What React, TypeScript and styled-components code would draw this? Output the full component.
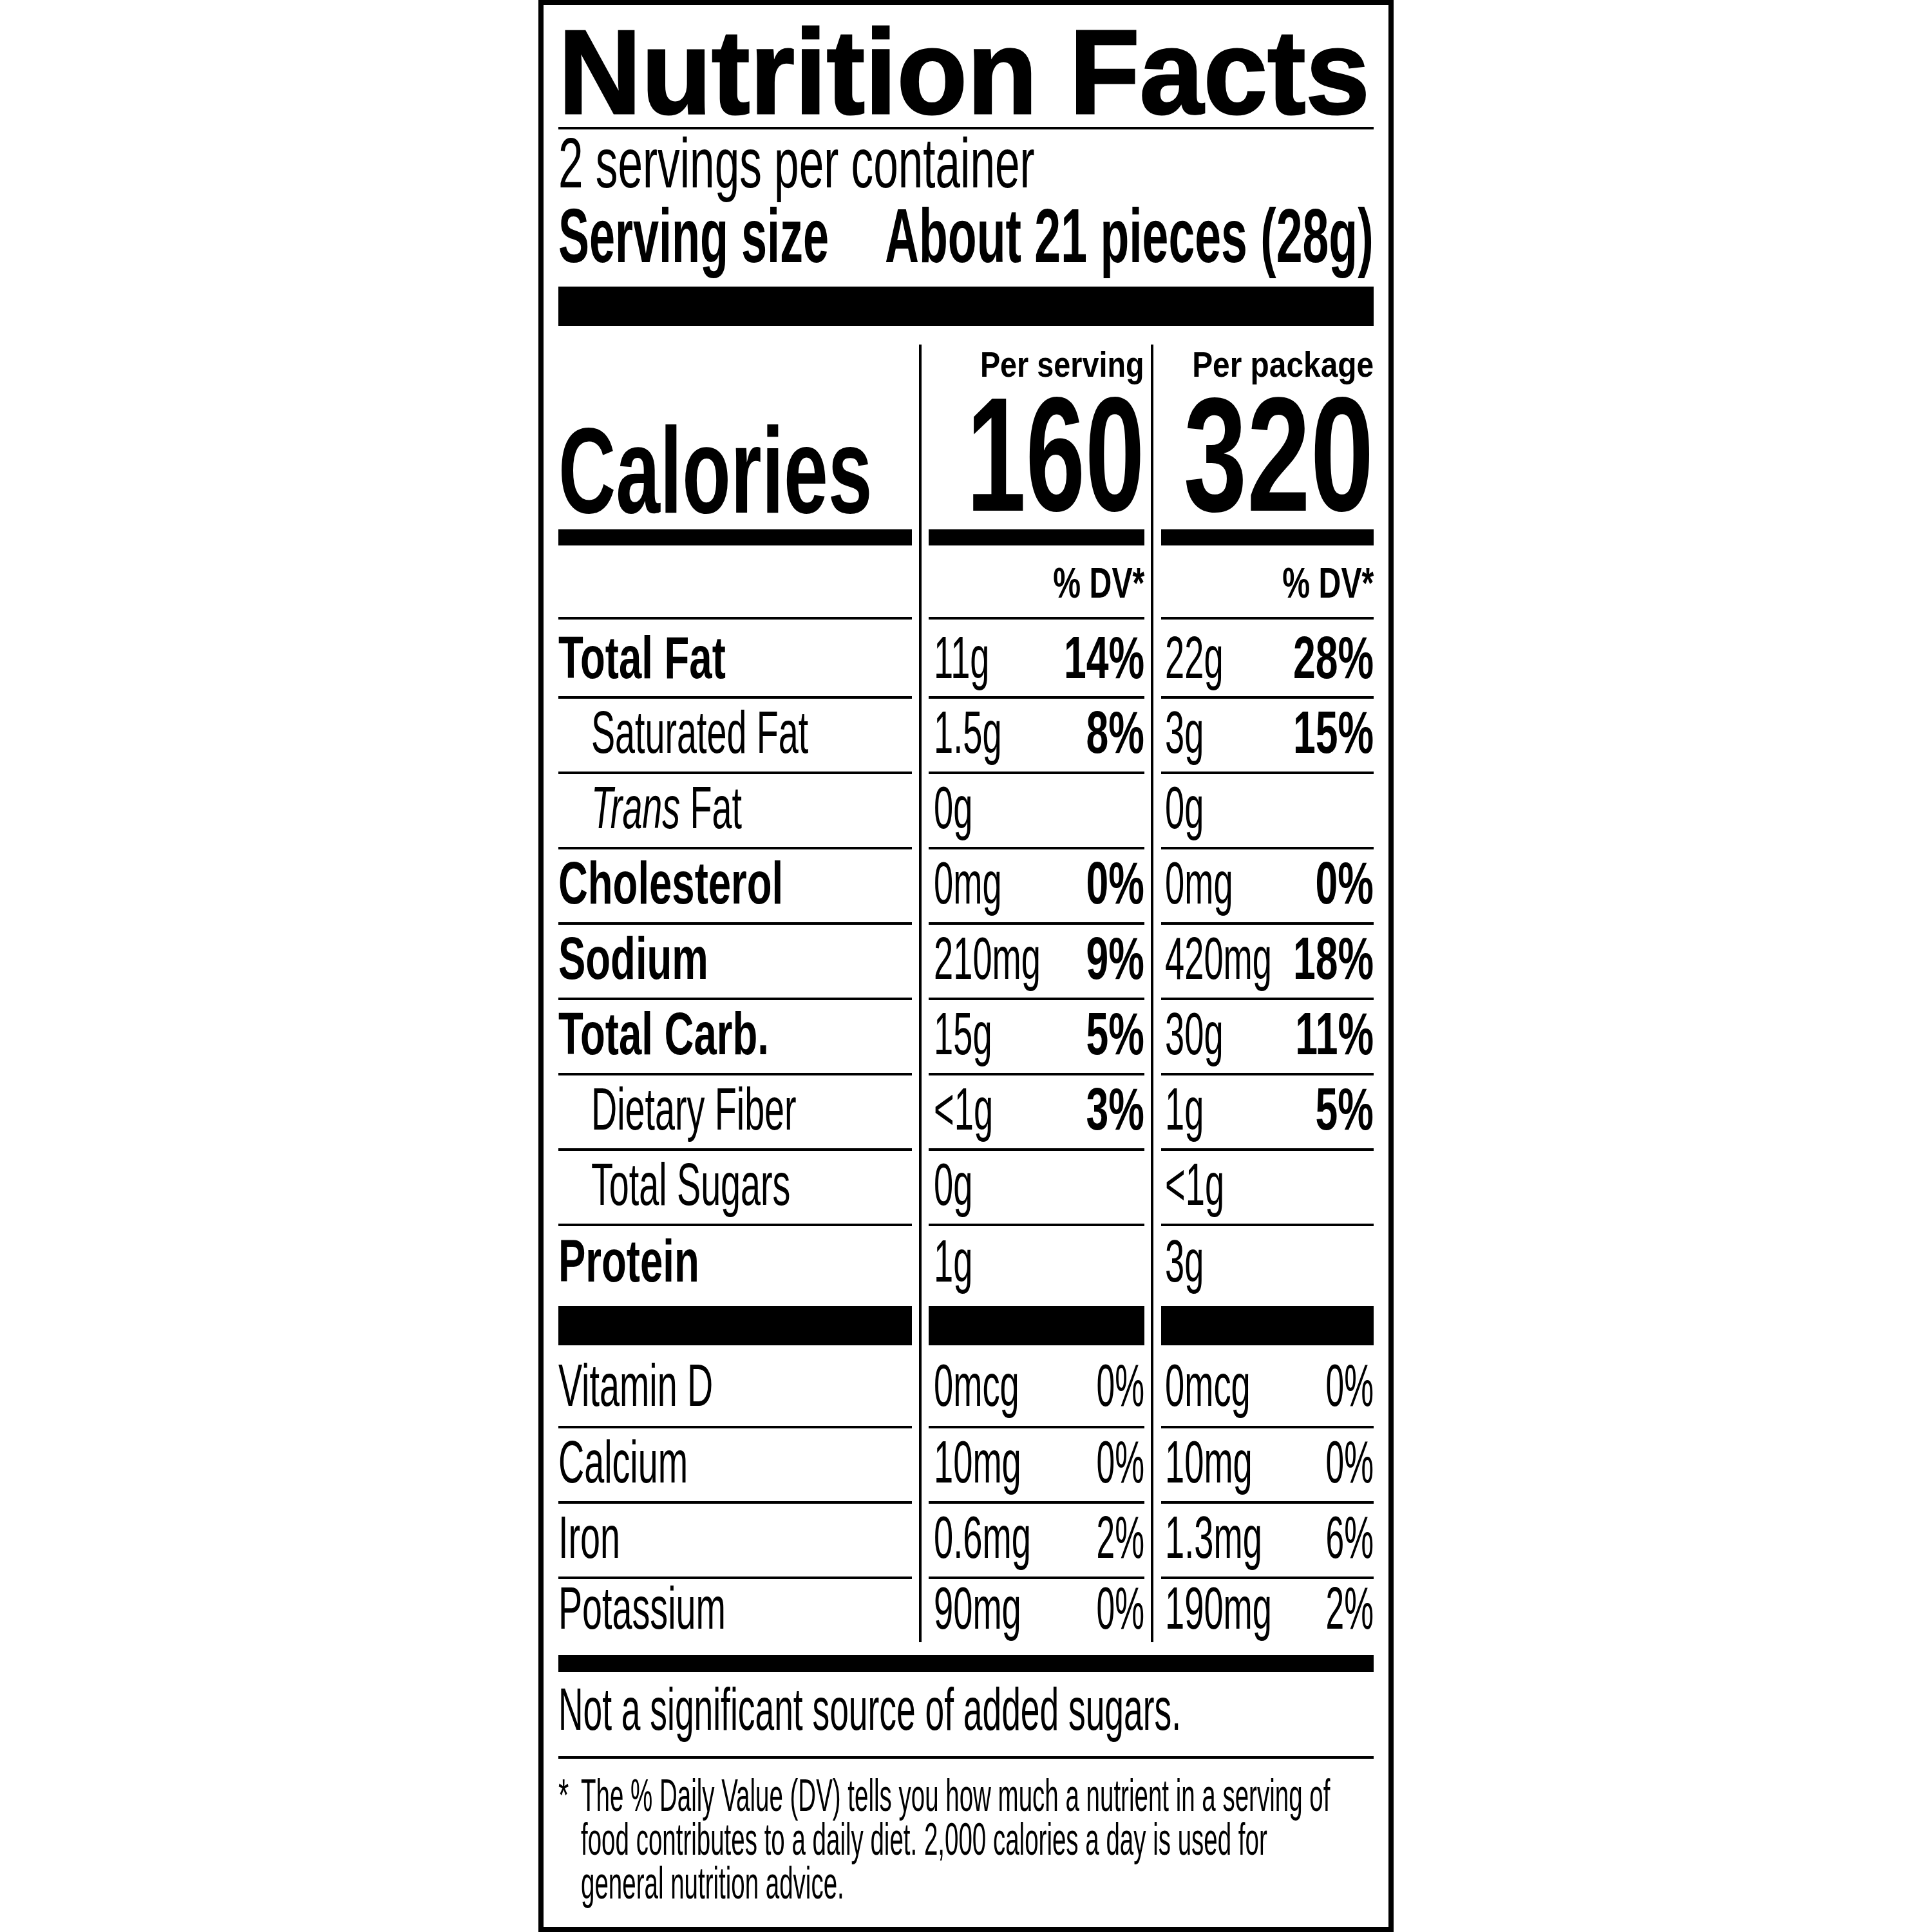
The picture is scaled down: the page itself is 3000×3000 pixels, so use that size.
import React from 'react';
import styled, { createGlobalStyle, css } from 'styled-components';

const GlobalStyle = createGlobalStyle`
  html,
  body {
    margin: 0;
    padding: 0;
    background: #fff;
    overflow: hidden;
  }
  body {
    font-family: 'Liberation Sans', Arial, sans-serif;
    color: #000;
  }
`;

// the label face is a condensed grotesque; we only have Arial widths, so squeeze horizontally
const squeeze = (k: number, from: 'left' | 'right' = 'left') => css`
  display: inline-block;
  flex-shrink: 0;
  white-space: nowrap;
  transform: scaleX(${k});
  transform-origin: ${from} center;
`;

const Page = styled.div`
  width: 3000px;
  height: 3000px;
  display: flex;
  justify-content: center;
`;

const Panel = styled.main`
  box-sizing: border-box;
  width: 1328px;
  height: 3000px;
  border: 8px solid #000;
  padding: 29px 23px 0;
  display: flex;
  flex-direction: column;
  overflow: hidden;
  background: #fff;
  & > * {
    flex-shrink: 0;
  }
`;

const Rule = styled.div<{ $h: number; $mt: number }>`
  height: ${(p) => p.$h}px;
  margin-top: ${(p) => p.$mt}px;
  background: #000;
`;

const Title = styled.h1`
  margin: 0;
  font-size: 186px;
  line-height: 150px;
  font-weight: 700;
  -webkit-text-stroke: 3px #000;
  ${squeeze(0.96)}
`;

const Servings = styled.p`
  margin: 2px 0 0;
  font-size: 110px;
  line-height: 100px;
  font-weight: 400;
  ${squeeze(0.63)}
`;

const ServingSizeRow = styled.div`
  margin-top: 4px;
  display: flex;
  font-size: 118px;
  line-height: 118px;
  font-weight: 700;
`;

const Slot = styled.div<{ $end?: boolean }>`
  flex: 1 1 0;
  min-width: 0;
  display: flex;
  justify-content: ${(p) => (p.$end ? 'flex-end' : 'flex-start')};
  align-items: flex-end;
`;

const ServingSizeText = styled.span<{ $k: number; $from?: 'left' | 'right' }>`
  ${(p) => squeeze(p.$k, p.$from)}
`;

const Table = styled.section`
  margin-top: 29px;
  display: grid;
  grid-template-columns: 549px 26px 335px 26px 330px;
  grid-template-rows: 312px 115px 123px repeat(7, 117px) 185px 129px 117px 117px 98px;
`;

const Divider = styled.div<{ $col: number; $offset: number }>`
  grid-column: ${(p) => p.$col};
  grid-row: 1 / -1;
  display: flex;
  padding-left: ${(p) => p.$offset}px;
  &::before {
    content: '';
    width: 4px;
    background: #000;
  }
`;

const CaloriesCell = styled.div`
  grid-column: 1;
  display: flex;
  align-items: flex-end;
  padding-bottom: 17px;
  border-bottom: 25px solid #000;
`;

const CaloriesText = styled.span`
  font-size: 190px;
  line-height: 150px;
  font-weight: 700;
  ${squeeze(0.65)}
`;

const AmountHead = styled.div<{ $col: number }>`
  grid-column: ${(p) => p.$col};
  display: flex;
  flex-direction: column;
  align-items: flex-end;
  padding-top: 4px;
  border-bottom: 25px solid #000;
`;

const ColumnHead = styled.span<{ $k: number }>`
  font-size: 55px;
  line-height: 55px;
  font-weight: 700;
  ${(p) => squeeze(p.$k, 'right')}
`;

const BigNumber = styled.span<{ $k: number }>`
  margin-top: 17px;
  font-size: 253px;
  line-height: 190px;
  font-weight: 700;
  ${(p) => squeeze(p.$k, 'right')}
`;

const Cell = styled.div<{ $col: number; $rule: number; $pb: number; $pl: number }>`
  grid-column: ${(p) => p.$col};
  display: flex;
  align-items: flex-end;
  padding: 0 0 ${(p) => p.$pb}px ${(p) => p.$pl}px;
  border-bottom: ${(p) => p.$rule}px solid #000;
`;

const DvHead = styled.span`
  font-size: 67px;
  line-height: 67px;
  font-weight: 700;
  ${squeeze(0.72, 'right')}
`;

const NutrientLabel = styled.span<{ $bold: boolean }>`
  font-size: 92px;
  line-height: 92px;
  font-weight: ${(p) => (p.$bold ? 700 : 400)};
  ${(p) => squeeze(p.$bold ? 0.69 : 0.605)}
  em {
    font-style: italic;
  }
`;

const Amount = styled.span`
  font-size: 92px;
  line-height: 92px;
  font-weight: 400;
  ${squeeze(0.59)}
`;

const Percent = styled.span<{ $bold: boolean }>`
  font-size: 92px;
  line-height: 92px;
  font-weight: ${(p) => (p.$bold ? 700 : 400)};
  ${(p) => squeeze(p.$bold ? 0.68 : 0.56, 'right')}
`;

const Note = styled.p`
  margin: 12px 0 0;
  font-size: 92px;
  line-height: 92px;
  font-weight: 400;
  ${squeeze(0.58)}
`;

const Footnote = styled.div`
  margin-top: 23px;
  display: flex;
  font-size: 70px;
  line-height: 68px;
`;

const Star = styled.span`
  width: 35px;
  flex-shrink: 0;
  display: flex;
  & > span {
    ${squeeze(0.6)}
  }
`;

const FootText = styled.span`
  ${squeeze(0.55)}
`;

type Kind = 'main' | 'sub' | 'vitamin';

type NutrientRow = {
  name: string;
  label: React.ReactNode;
  kind: Kind;
  serving: [string, string?];
  pack: [string, string?];
  rule?: number;
  pb?: number;
};

const ROWS: NutrientRow[] = [
  { name: 'fat', label: 'Total Fat', kind: 'main', serving: ['11g', '14%'], pack: ['22g', '28%'], pb: 14 },
  { name: 'sat', label: 'Saturated Fat', kind: 'sub', serving: ['1.5g', '8%'], pack: ['3g', '15%'] },
  {
    name: 'trans',
    label: (
      <>
        <em>Trans</em> Fat
      </>
    ),
    kind: 'sub',
    serving: ['0g'],
    pack: ['0g'],
  },
  { name: 'chol', label: 'Cholesterol', kind: 'main', serving: ['0mg', '0%'], pack: ['0mg', '0%'] },
  { name: 'sodium', label: 'Sodium', kind: 'main', serving: ['210mg', '9%'], pack: ['420mg', '18%'] },
  { name: 'carb', label: 'Total Carb.', kind: 'main', serving: ['15g', '5%'], pack: ['30g', '11%'] },
  { name: 'fiber', label: 'Dietary Fiber', kind: 'sub', serving: ['<1g', '3%'], pack: ['1g', '5%'] },
  { name: 'sugars', label: 'Total Sugars', kind: 'sub', serving: ['0g'], pack: ['<1g'] },
  { name: 'protein', label: 'Protein', kind: 'main', serving: ['1g'], pack: ['3g'], rule: 61, pb: 24 },
  { name: 'vitd', label: 'Vitamin D', kind: 'vitamin', serving: ['0mcg', '0%'], pack: ['0mcg', '0%'], pb: 17 },
  { name: 'calcium', label: 'Calcium', kind: 'vitamin', serving: ['10mg', '0%'], pack: ['10mg', '0%'] },
  { name: 'iron', label: 'Iron', kind: 'vitamin', serving: ['0.6mg', '2%'], pack: ['1.3mg', '6%'] },
  { name: 'potassium', label: 'Potassium', kind: 'vitamin', serving: ['90mg', '0%'], pack: ['190mg', '2%'], rule: 0, pb: 7 },
];

const ValueCell = ({ col, pl, row, values }: { col: number; pl: number; row: NutrientRow; values: [string, string?] }) => (
  <Cell $col={col} $rule={row.rule ?? 4} $pb={row.pb ?? 15} $pl={pl}>
    <Slot>
      <Amount>{values[0]}</Amount>
    </Slot>
    <Slot $end>{values[1] && <Percent $bold={row.kind !== 'vitamin'}>{values[1]}</Percent>}</Slot>
  </Cell>
);

const App = () => {
  return (
    <Page>
      <GlobalStyle />
      <Panel>
        <Title>Nutrition Facts</Title>
        <Rule $h={4} $mt={10} />
        <Servings>2 servings per container</Servings>
        <ServingSizeRow>
          <Slot>
            <ServingSizeText $k={0.61}>Serving size</ServingSizeText>
          </Slot>
          <Slot $end>
            <ServingSizeText $k={0.622} $from="right">
              About 21 pieces (28g)
            </ServingSizeText>
          </Slot>
        </ServingSizeRow>
        <Rule $h={61} $mt={20} />

        <Table>
          <Divider $col={2} $offset={11} />
          <Divider $col={4} $offset={10} />

          <CaloriesCell>
            <CaloriesText>Calories</CaloriesText>
          </CaloriesCell>
          <AmountHead $col={3}>
            <ColumnHead $k={0.85}>Per serving</ColumnHead>
            <BigNumber $k={0.655}>160</BigNumber>
          </AmountHead>
          <AmountHead $col={5}>
            <ColumnHead $k={0.87}>Per package</ColumnHead>
            <BigNumber $k={0.7}>320</BigNumber>
          </AmountHead>

          <Cell $col={1} $rule={4} $pb={20} $pl={0} />
          <Cell $col={3} $rule={4} $pb={20} $pl={0}>
            <Slot $end>
              <DvHead>% DV*</DvHead>
            </Slot>
          </Cell>
          <Cell $col={5} $rule={4} $pb={20} $pl={0}>
            <Slot $end>
              <DvHead>% DV*</DvHead>
            </Slot>
          </Cell>

          {ROWS.map((row) => (
            <React.Fragment key={row.name}>
              <Cell $col={1} $rule={row.rule ?? 4} $pb={row.pb ?? 15} $pl={row.kind === 'sub' ? 51 : 0}>
                <Slot>
                  <NutrientLabel $bold={row.kind === 'main'}>{row.label}</NutrientLabel>
                </Slot>
              </Cell>
              <ValueCell col={3} pl={8} row={row} values={row.serving} />
              <ValueCell col={5} pl={6} row={row} values={row.pack} />
            </React.Fragment>
          ))}
        </Table>

        <Rule $h={26} $mt={20} />
        <Note>Not a significant source of added sugars.</Note>
        <Rule $h={4} $mt={27} />
        <Footnote>
          <Star>
            <span>*</span>
          </Star>
          <FootText>
            The % Daily Value (DV) tells you how much a nutrient in a serving of
            <br />
            food contributes to a daily diet. 2,000 calories a day is used for
            <br />
            general nutrition advice.
          </FootText>
        </Footnote>
      </Panel>
    </Page>
  );
};

export default App;
